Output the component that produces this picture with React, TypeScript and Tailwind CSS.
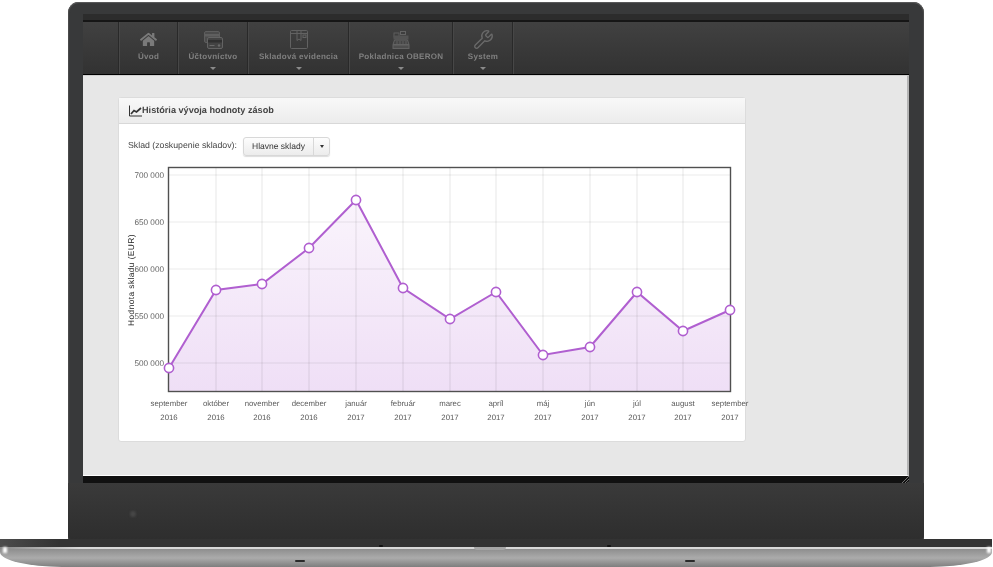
import React from "react";
import { FaHome } from "react-icons/fa";
import { Wrench } from "lucide-react";

const pts: [number, number][] = [
  [169, 368], [216, 290], [262, 284], [309, 248], [356, 200], [403, 288], [450, 319],
  [496, 292], [543, 355], [590, 347], [637, 292], [683, 331], [730, 310],
];
const months: [string, string][] = [
  ["september", "2016"], ["október", "2016"], ["november", "2016"], ["december", "2016"],
  ["január", "2017"], ["február", "2017"], ["marec", "2017"], ["apríl", "2017"], ["máj", "2017"],
  ["jún", "2017"], ["júl", "2017"], ["august", "2017"], ["september", "2017"],
];
const yTicks: [string, number][] = [["700 000", 175], ["650 000", 222], ["600 000", 269], ["550 000", 316], ["500 000", 363]];

function CardsIcon() {
  return (
    <svg width="19" height="18" viewBox="0 0 19 18" fill="none">
      <rect x="0.5" y="0.5" width="15" height="11" rx="1.5" fill="#4c4c4c" stroke="#5e5e5e" />
      <rect x="1" y="3" width="14" height="2.5" fill="#5f5f5f" />
      <rect x="3.5" y="6.5" width="15" height="11" rx="1.5" fill="#434343" stroke="#636363" />
      <rect x="4" y="9" width="14" height="2.5" fill="#303030" />
      <circle cx="15" cy="14.5" r="1.2" fill="#6a6a6a" />
      <path d="M5.5 14.5h5" stroke="#6a6a6a" />
    </svg>
  );
}
function BoxIcon() {
  return (
    <svg width="18" height="19" viewBox="0 0 18 19" fill="none" stroke="#626262">
      <rect x="0.5" y="0.5" width="17" height="18" rx="1" />
      <path d="M0.5 3.5h17M7 0.5v10l2-1.5 2 1.5V0.5" />
      <rect x="13" y="5" width="3" height="2.5" />
    </svg>
  );
}
function RegisterIcon() {
  return (
    <svg width="18" height="18" viewBox="0 0 18 18" fill="none">
      <rect x="8.5" y="0.5" width="5" height="3" stroke="#636363" />
      <rect x="2" y="2" width="5" height="4" stroke="#5e5e5e" />
      <rect x="1.5" y="4.5" width="15" height="4" fill="#535353" />
      <path d="M2.5 9h13l1.5 4.5H1z" fill="#454545" stroke="#626262" />
      <path d="M5 10v3M8 10v3M11 10v3M14 10v3" stroke="#606060" />
      <rect x="1" y="14" width="16" height="3.5" fill="#4e4e4e" stroke="#626262" />
    </svg>
  );
}

function NavItem({ w, label, icon, caret }: { w: string; label: string; icon: React.ReactNode; caret?: boolean }) {
  return (
    <div className={`${w} border-l border-l-[#292929] shadow-[inset_1px_0_0_#474747] flex flex-col items-center pt-[6px] pl-[1px]`}>
      <div className="h-[23px] flex items-center justify-center">{icon}</div>
      <div className="text-[8px] leading-[10px] font-bold tracking-[0.3px] text-[#808080] mt-[1px] whitespace-nowrap">{label}</div>
      {caret && <div className="mt-[5px] w-0 h-0 border-x-[3px] border-x-transparent border-t-[3px] border-t-[#8a8a8a]" />}
    </div>
  );
}

function Chart() {
  const line = pts.map((p) => p.join(",")).join(" ");
  const area = `169,391 ${line} 730,391`;
  return (
    <svg width="626" height="282" viewBox="119 160 626 282" className="overflow-visible block">
      <defs>
        <linearGradient id="areaFill" x1="0" y1="0" x2="0" y2="1">
          <stop offset="0" stopColor="#faf4fc" />
          <stop offset="1" stopColor="#efdff6" />
        </linearGradient>
      </defs>
      <rect x="169" y="168" width="561" height="223" fill="#fff" />
      <polygon points={area} fill="url(#areaFill)" />
      {yTicks.map(([, y]) => (
        <line key={y} x1="169" x2="730" y1={y} y2={y} stroke="#1e1e1e" strokeOpacity="0.09" strokeWidth="1.2" />
      ))}
      {pts.slice(1, -1).map(([x]) => (
        <line key={x} x1={x} x2={x} y1="168" y2="391" stroke="#1e1e1e" strokeOpacity="0.09" strokeWidth="1.2" />
      ))}
      <rect x="168.5" y="167.5" width="562" height="224" fill="none" stroke="#505050" strokeWidth="1.4" />
      <polyline points={line} fill="none" stroke="#b05fd0" strokeWidth="2" />
      {pts.map(([x, y]) => (
        <circle key={x} cx={x} cy={y} r="4.6" fill="#fff" stroke="#b05fd0" strokeWidth="1.6" />
      ))}
      {yTicks.map(([t, y]) => (
        <text key={t} x="164" y={y + 3} textAnchor="end" fontSize="8.2" fill="#666">{t}</text>
      ))}
      {months.map(([m, yr], i) => (
        <g key={i} fontSize="7.8" fill="#5a5a5a" textAnchor="middle">
          <text x={pts[i][0]} y="406">{m}</text>
          <text x={pts[i][0]} y="420">{yr}</text>
        </g>
      ))}
      <text transform="translate(134 280) rotate(-90)" textAnchor="middle" fontSize="8.4" letterSpacing="0.4" fill="#222">Hodnota skladu (EUR)</text>
    </svg>
  );
}

export default function App() {
  return (
    <div className="w-[993px] h-[567px] bg-white overflow-hidden flex flex-col font-['Liberation_Sans',Arial,sans-serif] [text-rendering:geometricPrecision]">
      <div className="mt-[2px] ml-[68px] w-[856px] h-[537px] rounded-t-[11px] bg-[#38393a] shadow-[inset_0_1px_1px_#5c5c5c,inset_1px_0_1px_#4c4c4c,inset_-1px_0_1px_#4c4c4c] flex flex-col">
        <div className="h-[12px] shrink-0" />
        <div className="mx-[15px] h-[6px] bg-[#2c2c2c] shrink-0" />
        <div className="mx-[15px] h-[2px] bg-[#161616] shrink-0" />
        <div className="mx-[15px] flex flex-col shrink-0 blur-[0.35px]">
          <div className="h-[52px] bg-linear-to-b from-[#414141] to-[#323232] flex pl-[35px]">
            <NavItem w="w-[59px]" label="Úvod" icon={<FaHome size={17} color="#7a7a7a" />} />
            <NavItem w="w-[70px]" label="Účtovníctvo" icon={<CardsIcon />} caret />
            <NavItem w="w-[101px]" label="Skladová evidencia" icon={<BoxIcon />} caret />
            <NavItem w="w-[104px]" label="Pokladnica OBERON" icon={<RegisterIcon />} caret />
            <NavItem w="w-[60px]" label="System" icon={<Wrench size={21} color="#6a6a6a" strokeWidth={1.5} />} caret />
            <div className="border-l border-l-[#292929] shadow-[inset_1px_0_0_#474747] w-[2px]" />
          </div>
          <div className="h-[1px] bg-black" />
          <div className="h-[401px] bg-[#e7e7e7] border-t border-t-[#d0d0d0] border-r-2 border-r-[#b4b4b4] border-b border-b-white pt-[21px] pl-[35px]">
            <div className="w-[628px] h-[345px] bg-white rounded-[3px] border border-[#dcdcdc] flex flex-col">
              <div className="h-[26px] shrink-0 bg-linear-to-b from-[#f8f8f8] to-[#ececec] border-b border-b-[#d8d8d8] flex items-center pl-[10px]">
                <svg width="13" height="12" viewBox="0 0 13 12" fill="none" stroke="#333" className="shrink-0">
                  <path d="M0.5 0.5v10.5H13" />
                  <path d="M2 9l3-3.5 2.5 1.5L12 3" strokeWidth="1.7" />
                </svg>
                <span className="text-[9.15px] font-bold text-[#444]">História vývoja hodnoty zásob</span>
              </div>
              <div className="flex items-center h-[36px] shrink-0 pl-[9px] pt-[8px]">
                <span className="w-[109px] text-[8.75px] text-[#444] whitespace-nowrap">Sklad (zoskupenie skladov):</span>
                <div className="ml-[6px] flex h-[19px] rounded-[3px] border border-[#d8d8d8] bg-linear-to-b from-[#fdfdfd] to-[#ececec] shadow-[0_1px_1px_#ddd]">
                  <div className="w-[70px] flex items-center justify-center text-[8.5px] text-[#333] border-r border-r-[#d8d8d8]">Hlavne sklady</div>
                  <div className="w-[15px] flex items-center justify-center">
                    <div className="w-0 h-0 border-x-[2.5px] border-x-transparent border-t-[3px] border-t-[#333]" />
                  </div>
                </div>
              </div>
              <Chart />
            </div>
          </div>
          <div className="h-[7px] bg-[#111] flex justify-end items-end">
            <svg width="7" height="7" viewBox="0 0 7 7" stroke="#8a8a8a" strokeWidth="0.8">
              <path d="M0 7L7 0M3 7L7 3M5.5 7L7 5.5" />
            </svg>
          </div>
        </div>
        <div className="flex-1 rounded-b-[3px] bg-linear-to-b from-[#3a3a3a] to-[#2e2e2e] pl-[62px] pt-[28px]">
          <div className="w-[6px] h-[6px] rounded-full bg-[#474747] blur-[0.8px]" />
        </div>
      </div>
      <div className="relative w-[992px] h-[28px] overflow-hidden flex flex-col rounded-bl-[62px_15px] rounded-br-[62px_15px]">
        <div className="h-[8px] shrink-0 bg-linear-to-r from-[#4c4c4c] via-[#333] via-[6%] to-[#333]" />
        <div className="h-[2px] shrink-0 bg-linear-to-r from-[#888] via-[#d8d8d8] via-[8%] to-[#d8d8d8]" />
        <div className="flex-1 bg-linear-to-b from-[#8e8e8e] via-[#ababab] to-[#7e7e7e]" />
        <div className="absolute left-[474px] top-[8px] w-[32px] h-[3px] rounded-b-[3px] bg-[#a6a6a6]" />
        <div className="absolute left-[379px] top-[6px] w-[4px] h-[2px] bg-[#111] rounded-full" />
        <div className="absolute left-[607px] top-[6px] w-[4px] h-[2px] bg-[#111] rounded-full" />
        <div className="absolute left-[295px] top-[21px] w-[10px] h-[2px] bg-[#2a2a2a] rounded-full blur-[0.5px]" />
        <div className="absolute left-[685px] top-[21px] w-[10px] h-[2px] bg-[#2a2a2a] rounded-full blur-[0.5px]" />
        <div className="absolute left-[3px] top-[8px] w-[4px] h-[6px] bg-white blur-[1px]" />
        <div className="absolute right-[1px] top-[8px] w-[4px] h-[6px] bg-white blur-[1px]" />
      </div>
    </div>
  );
}
